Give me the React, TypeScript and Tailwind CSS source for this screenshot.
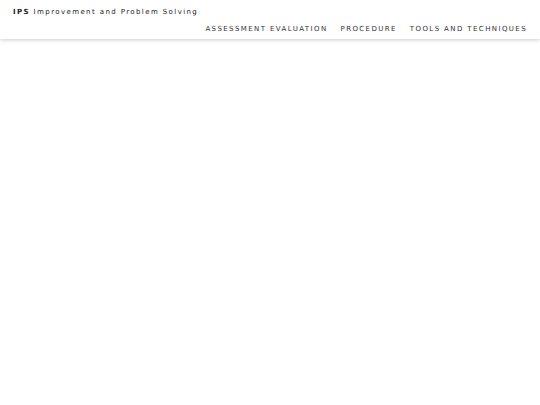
export default function App() {
  return (
    <div className="min-h-[405px] w-full bg-white font-['DejaVu_Sans',Verdana,sans-serif]">
      <header className="flex flex-col px-[13px] pt-[7px] pb-[5px] shadow-[0_1px_4px_rgba(0,0,0,0.2)]">
        <div className="text-[7px] leading-[10px] tracking-[0.2em] text-[#222]">
          <span className="font-bold">IPS</span> Improvement and Problem Solving
        </div>
        <nav className="mt-[7px] flex justify-end gap-[13px] pr-[0px] text-[7px] leading-[10px] tracking-[0.2em] text-[#333]">
          <a>ASSESSMENT EVALUATION</a>
          <a>PROCEDURE</a>
          <a>TOOLS AND TECHNIQUES</a>
        </nav>
      </header>
    </div>
  )
}
